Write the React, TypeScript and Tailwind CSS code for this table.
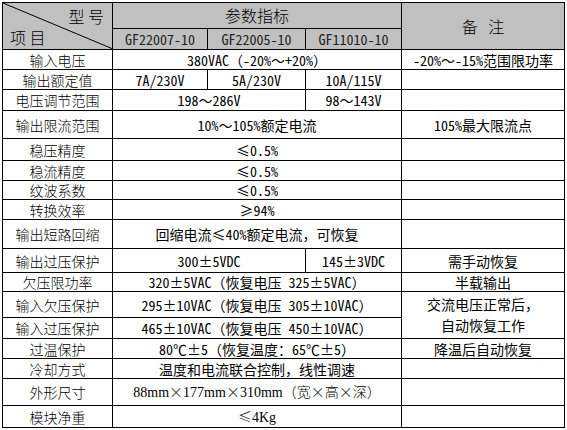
import React from "react";

type Cell = {
  text?: React.ReactNode;
  span?: number;
  rows?: number;
  serif?: boolean;
};

type Row = {
  label: string;
  h: number;
  cells: Cell[];
};

const MONO = "font-['Noto_Sans_Mono_CJK_SC','Liberation_Mono','Noto_Sans_CJK_SC',monospace] font-light";
const SANS = "font-['Noto_Sans_CJK_SC','Liberation_Sans',sans-serif] font-light";
const SERIF = "font-['Liberation_Serif','Noto_Sans_CJK_SC',serif]";

// the reference uses full-width CJK glyphs for × and brackets inside the serif text
const Cjk = ({ children }: { children: React.ReactNode }) => <span className={SANS}>{children}</span>;

const rows: Row[] = [
  { label: "输入电压", h: 20, cells: [{ text: "380VAC（-20%～+20%）", span: 3 }, { text: "-20%～-15%范围限功率" }] },
  { label: "输出额定值", h: 20, cells: [{ text: "7A/230V" }, { text: "5A/230V" }, { text: "10A/115V" }, {}] },
  { label: "电压调节范围", h: 21, cells: [{ text: "198～286V", span: 2 }, { text: "98～143V" }, {}] },
  { label: "输出限流范围", h: 28, cells: [{ text: "10%～105%额定电流", span: 3 }, { text: "105%最大限流点" }] },
  { label: "稳压精度", h: 22, cells: [{ text: "≤0.5%", span: 3 }, {}] },
  { label: "稳流精度", h: 20, cells: [{ text: "≤0.5%", span: 3 }, {}] },
  { label: "纹波系数", h: 19, cells: [{ text: "≤0.5%", span: 3 }, {}] },
  { label: "转换效率", h: 20, cells: [{ text: "≥94%", span: 3 }, {}] },
  { label: "输出短路回缩", h: 29, cells: [{ text: "回缩电流≤40%额定电流，可恢复", span: 3 }, {}] },
  { label: "输出过压保护", h: 24, cells: [{ text: "300±5VDC", span: 2 }, { text: "145±3VDC" }, { text: "需手动恢复" }] },
  { label: "欠压限功率", h: 19, cells: [{ text: "320±5VAC（恢复电压 325±5VAC）", span: 3 }, { text: "半载输出" }] },
  {
    label: "输入欠压保护",
    h: 26,
    cells: [
      { text: "295±10VAC（恢复电压 305±10VAC）", span: 3 },
      { text: <>交流电压正常后，<br />自动恢复工作</>, rows: 2 },
    ],
  },
  { label: "输入过压保护", h: 21, cells: [{ text: "465±10VAC（恢复电压 450±10VAC）", span: 3 }] },
  { label: "过温保护", h: 20, cells: [{ text: "80℃±5（恢复温度：65℃±5）", span: 3 }, { text: "降温后自动恢复" }] },
  { label: "冷却方式", h: 20, cells: [{ text: "温度和电流联合控制，线性调速", span: 3 }, {}] },
  {
    label: "外形尺寸",
    h: 27,
    cells: [
      {
        text: (
          <>
            88mm<Cjk>×</Cjk>177mm<Cjk>×</Cjk>310mm<Cjk>（宽×高×深）</Cjk>
          </>
        ),
        span: 3,
        serif: true,
      },
      {},
    ],
  },
  {
    label: "模块净重",
    h: 22,
    cells: [
      {
        text: (
          <>
            <Cjk>≤</Cjk>4Kg
          </>
        ),
        span: 3,
        serif: true,
      },
      {},
    ],
  },
];

export default function App() {
  return (
    <div className="w-[567px] h-[430px] bg-white pl-[2px] pt-[2px] text-black">
      <table className="table-fixed border-collapse border border-black">
        <colgroup>
          <col className="w-[110px]" />
          <col className="w-[95px]" />
          <col className="w-[98px]" />
          <col className="w-[96px]" />
          <col className="w-[163px]" />
        </colgroup>
        <tbody>
          <tr className="h-[25px] bg-[#c0c0c0]">
            <td rowSpan={2} className="border border-black p-0 align-top">
              <div className={`relative h-[46px] flex flex-col justify-between ${SANS} text-[16px] leading-none`}>
                <svg className="absolute inset-0" width="110" height="46" viewBox="0 0 110 46">
                  <line x1="0" y1="0" x2="110" y2="46" stroke="#000" strokeWidth="1" />
                </svg>
                <div className="text-right pr-[8px] pt-[5px]">型 号</div>
                <div className="text-left pl-[7px] pb-[4px]">项 目</div>
              </div>
            </td>
            <td colSpan={3} className={`border border-black p-0 text-center ${SANS} text-[16px] leading-none`}>
              参数指标
            </td>
            <td rowSpan={2} className={`border border-black p-0 text-center ${SANS} text-[16px] leading-none`}>
              备&nbsp;&nbsp;&nbsp;注
            </td>
          </tr>
          <tr className="h-[21px] bg-[#c0c0c0]">
            {["GF22007-10", "GF22005-10", "GF11010-10"].map((m) => (
              <td key={m} className={`border border-black p-0 text-center ${MONO} text-[14px] leading-none text-[#222]`}>
                {m}
              </td>
            ))}
          </tr>
          {rows.map((r) => (
            <tr key={r.label} style={{ height: r.h }}>
              <td className={`border border-black p-0 text-center ${SANS} text-[14px] leading-none`}>{r.label}</td>
              {r.cells.map((c, i) => (
                <td
                  key={i}
                  colSpan={c.span}
                  rowSpan={c.rows}
                  className={`border border-black p-0 text-center ${c.serif ? SERIF : MONO} text-[14px] ${
                    c.rows ? "leading-[21px]" : "leading-[18px]"
                  }`}
                >
                  {c.text}
                </td>
              ))}
            </tr>
          ))}
        </tbody>
      </table>
    </div>
  );
}
